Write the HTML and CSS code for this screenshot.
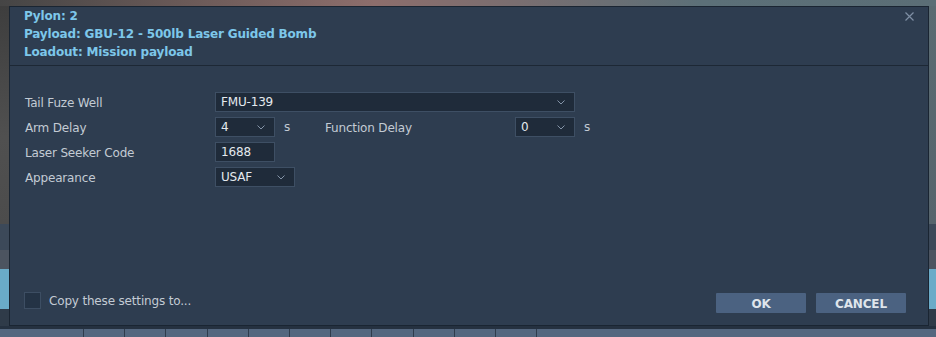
FILE: index.html
```html
<!DOCTYPE html>
<html>
<head>
<meta charset="utf-8">
<link rel="stylesheet" href="styles.css">
</head>
<body>
<div class="scene">
  <div class="backdrop">
    <div class="bd-top"></div>
    <div class="bd-mid">
      <div class="bd-side bd-left">
        <div class="b1"></div><div class="b2"></div><div class="b3"></div><div class="b4"></div><div class="b5"></div>
      </div>
      <div class="bd-center"></div>
      <div class="bd-side bd-right">
        <div class="b1"></div><div class="b2"></div><div class="b3"></div><div class="b4"></div><div class="b5"></div>
      </div>
    </div>
    <div class="bd-bottom">
      <div class="bd-dark"></div>
      <div class="tabs">
        <div class="tab first"></div>
        <div class="tab"></div><div class="tab"></div><div class="tab"></div><div class="tab"></div><div class="tab"></div><div class="tab"></div>
        <div class="tab"></div><div class="tab"></div><div class="tab"></div><div class="tab"></div><div class="tab"></div>
        <div class="tab rest"></div>
      </div>
    </div>
  </div>

  <div class="dialog">
    <div class="header">
      <div class="title">Pylon: 2</div>
      <div class="title">Payload: GBU-12 - 500lb Laser Guided Bomb</div>
      <div class="title">Loadout: Mission payload</div>
      <svg class="close" width="9" height="9" viewBox="0 0 9 9"><path d="M0.5 0.5 L8.5 8.5 M8.5 0.5 L0.5 8.5" stroke="#7e8fa4" stroke-width="1.2" fill="none"/></svg>
    </div>
    <div class="body">
      <div class="row">
        <div class="label">Tail Fuze Well</div>
        <div class="select w360"><span>FMU-139</span><svg class="chev" width="8" height="5" viewBox="0 0 8 5"><path d="M0.5 0.5 L4 4 L7.5 0.5" stroke="#8494a8" stroke-width="1" fill="none"/></svg></div>
      </div>
      <div class="row">
        <div class="label">Arm Delay</div>
        <div class="select w60"><span>4</span><svg class="chev" width="8" height="5" viewBox="0 0 8 5"><path d="M0.5 0.5 L4 4 L7.5 0.5" stroke="#8494a8" stroke-width="1" fill="none"/></svg></div>
        <div class="unit">s</div>
        <div class="label">Function Delay</div>
        <div class="select w60"><span>0</span><svg class="chev" width="8" height="5" viewBox="0 0 8 5"><path d="M0.5 0.5 L4 4 L7.5 0.5" stroke="#8494a8" stroke-width="1" fill="none"/></svg></div>
        <div class="unit">s</div>
      </div>
      <div class="row">
        <div class="label">Laser Seeker Code</div>
        <div class="input w60">1688</div>
      </div>
      <div class="row">
        <div class="label">Appearance</div>
        <div class="select w80"><span>USAF</span><svg class="chev" width="8" height="5" viewBox="0 0 8 5"><path d="M0.5 0.5 L4 4 L7.5 0.5" stroke="#8494a8" stroke-width="1" fill="none"/></svg></div>
      </div>
    </div>
    <div class="footer">
      <div class="check-wrap">
        <div class="checkbox"></div>
        <div class="check-label">Copy these settings to...</div>
      </div>
      <div class="buttons">
        <div class="btn">OK</div>
        <div class="btn">CANCEL</div>
      </div>
    </div>
  </div>
</div>
</body>
</html>
```

FILE: styles.css
```css
* { box-sizing: border-box; }
html, body { margin: 0; padding: 0; }
body {
  width: 936px;
  height: 337px;
  overflow: hidden;
  font-family: "DejaVu Sans", "Liberation Sans", sans-serif;
  letter-spacing: -0.17px;
  background: #2e3d50;
}
.scene {
  position: relative;
  width: 936px;
  height: 337px;
}
.backdrop {
  width: 936px;
  height: 337px;
  display: flex;
  flex-direction: column;
}
.bd-top {
  height: 6px;
  background: linear-gradient(90deg, #454545 0%, #6b5a58 20%, #8d6e6c 40%, #7a6e70 55%, #5c7078 75%, #5b6e76 100%);
}
.bd-mid {
  height: 320px;
  display: flex;
}
.bd-side {
  width: 9px;
  display: flex;
  flex-direction: column;
}
.bd-right { width: 8px; }
.bd-center { flex: 1; background: #2e3d50; }
.bd-left .b1 { height: 218px; background: linear-gradient(180deg, #3e3e3e, #505050 60%, #4c4c4c); }
.bd-right .b1 { height: 218px; background: linear-gradient(180deg, #5a6b72, #56646c); }
.b2 { height: 26px; background: #3c4959; }
.b3 { height: 19px; background: #4c5460; }
.b4 { height: 40px; background: #6aabc8; }
.b5 { flex: 1; background: #2f3b49; }
.bd-bottom {
  flex: 1;
  display: flex;
  flex-direction: column;
}
.bd-dark { height: 3px; background: #253140; }
.tabs {
  flex: 1;
  display: flex;
  background: #54677f;
}
.tab {
  width: 41.2px;
  border-right: 1px solid #2f3c4c;
}
.tab.first { width: 84px; }
.tab.rest { flex: 1; border-right: none; }

.dialog {
  position: absolute;
  left: 9px;
  top: 6px;
  width: 920px;
  height: 320px;
  background: #2e3d50;
  border: 1px solid #1a2532;
  display: flex;
  flex-direction: column;
}
.header {
  position: relative;
  height: 59px;
  padding: 0 14px;
  border-bottom: 1px solid #1d2835;
}
.title {
  font-weight: bold;
  font-size: 12px;
  line-height: 18px;
  color: #7dc7ea;
}
.close {
  position: absolute;
  right: 14px;
  top: 5px;
}
.body {
  padding: 26px 15px 0;
  display: flex;
  flex-direction: column;
  gap: 5px;
}
.row {
  display: flex;
  align-items: center;
  height: 20px;
}
.label {
  width: 190px;
  font-size: 12px;
  color: #c3cbd4;
  padding-top: 1px;
}
.select, .input {
  height: 20px;
  background: #1f2b3a;
  border: 1px solid #3e4f64;
  display: flex;
  align-items: center;
  justify-content: space-between;
  padding: 0 9px 0 5px;
  font-size: 12px;
  color: #e4e9ee;
}
.w360 { width: 360px; }
.w60 { width: 60px; }
.w80 { width: 80px; }
.chev { flex: none; }
.unit {
  width: 50px;
  padding-left: 9px;
  font-size: 12px;
  color: #c3cbd4;
}
.footer {
  margin-top: auto;
  display: flex;
  justify-content: space-between;
  align-items: flex-end;
  padding: 0 22px 12px 14px;
}
.check-wrap {
  display: flex;
  align-items: center;
  gap: 8px;
  margin-bottom: 4px;
}
.checkbox {
  width: 17px;
  height: 17px;
  background: #243345;
  border: 1px solid #3d4e63;
}
.check-label {
  font-size: 12px;
  color: #c3cbd4;
}
.buttons {
  display: flex;
  gap: 10px;
}
.btn {
  width: 90px;
  height: 20px;
  background: #4b6281;
  border-radius: 1px;
  color: #dfe5ec;
  font-weight: bold;
  font-size: 12px;
  display: flex;
  align-items: center;
  justify-content: center;
  padding-top: 1px;
}
```
